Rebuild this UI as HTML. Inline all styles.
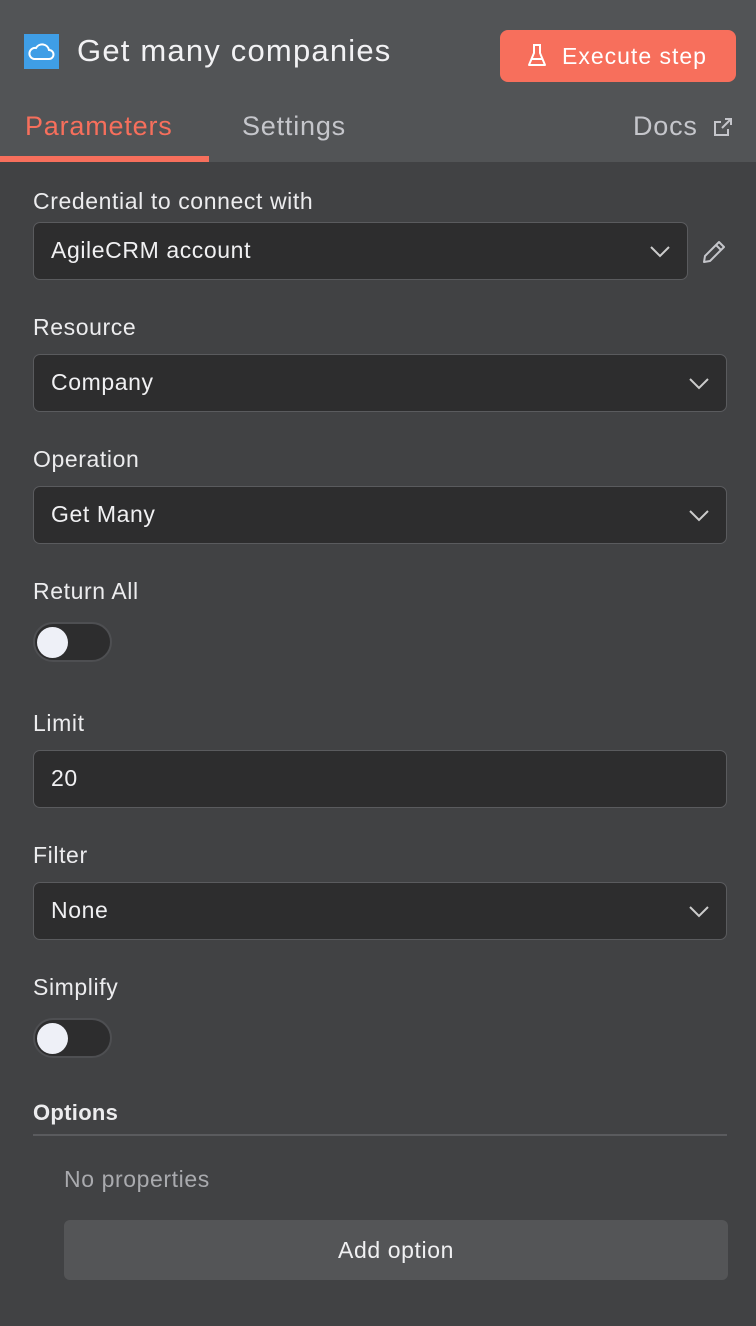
<!DOCTYPE html><html><head><style>
*{box-sizing:border-box;margin:0;padding:0}
body{width:756px;height:1326px;background:#414244;font-family:"Liberation Sans",sans-serif;color:#e8e8ea;position:relative;overflow:hidden}
.hdr{position:absolute;left:0;top:0;width:756px;height:162px;background:#525456}
.abs{position:absolute}
.lbl{position:absolute;left:33px;font-size:23px;letter-spacing:0.6px;color:#ececee}
.inp{position:absolute;left:33px;width:694px;height:58px;background:#2d2d2e;border:1.5px solid #5a5b5e;border-radius:7px;font-size:23px;letter-spacing:0.6px;padding-left:17px;line-height:55px;color:#f0f0f2}
.chev{position:absolute;right:16px;top:21px}
.tog{position:absolute;left:33px;width:79px;height:40px;border-radius:20px;background:#2d2d2e;border:2px solid #4e4f52}
.tog:after{content:"";position:absolute;left:2px;top:3px;width:31px;height:31px;border-radius:50%;background:#eef0f7}
</style></head><body>
<div class="hdr"></div>
<div class="abs" style="left:24px;top:34px;width:35px;height:35px;background:#3f9ee6"></div>
<svg class="abs" style="left:24px;top:34px" width="35" height="35" viewBox="0 0 35 35"><path d="M10 25h15a4.5 4.5 0 0 0 0-9 7 7 0 0 0-13-2 5.5 5.5 0 0 0-2 11z" fill="none" stroke="#fff" stroke-width="2"/></svg>
<div class="abs" style="left:77px;top:33px;font-size:31px;letter-spacing:1.2px;color:#f2f2f4">Get many companies</div>
<div class="abs" style="left:500px;top:30px;width:236px;height:52px;background:#f76f5c;border-radius:8px;color:#fff;font-size:23px;letter-spacing:1px;line-height:52px;padding-left:62px">Execute step</div>
<svg class="abs" style="left:526px;top:43px" width="22" height="26" viewBox="0 0 22 26"><path d="M7 2h8M8 2v8L3 22h16L14 10V2M6 16h10" fill="none" stroke="#fff" stroke-width="2" stroke-linejoin="round"/></svg>
<div class="abs" style="left:25px;top:111px;font-size:27px;letter-spacing:0.8px;color:#f76f5c">Parameters</div>
<div class="abs" style="left:0;top:156px;width:209px;height:6px;background:#f76f5c"></div>
<div class="abs" style="left:242px;top:111px;font-size:27px;letter-spacing:0.8px;color:#c5c6cb">Settings</div>
<div class="abs" style="left:633px;top:111px;font-size:27px;letter-spacing:0.8px;color:#c5c6cb">Docs</div>
<svg class="abs" style="left:712px;top:116px" width="22" height="22" viewBox="0 0 22 22"><path d="M13 3h6v6M19 3l-9 9M16 13v6H3V6h6" fill="none" stroke="#c5c6cb" stroke-width="2"/></svg>

<div class="lbl" style="top:188px">Credential to connect with</div>
<div class="inp" style="top:222px;width:655px">AgileCRM account<svg class="chev" width="22" height="14"><path d="M2 3l9 9 9-9" fill="none" stroke="#ccc" stroke-width="2"/></svg></div>
<svg class="abs" style="left:700px;top:238px" width="28" height="28" viewBox="0 0 28 28"><path d="M4 24l1-6L19 4l5 5-14 14zM16 7l5 5" fill="none" stroke="#c5c6cb" stroke-width="2" stroke-linejoin="round"/></svg>

<div class="lbl" style="top:314px">Resource</div>
<div class="inp" style="top:354px">Company<svg class="chev" width="22" height="14"><path d="M2 3l9 9 9-9" fill="none" stroke="#ccc" stroke-width="2"/></svg></div>
<div class="lbl" style="top:446px">Operation</div>
<div class="inp" style="top:486px">Get Many<svg class="chev" width="22" height="14"><path d="M2 3l9 9 9-9" fill="none" stroke="#ccc" stroke-width="2"/></svg></div>
<div class="lbl" style="top:578px">Return All</div>
<div class="tog" style="top:622px"></div>
<div class="lbl" style="top:710px">Limit</div>
<div class="inp" style="top:750px">20</div>
<div class="lbl" style="top:842px">Filter</div>
<div class="inp" style="top:882px">None<svg class="chev" width="22" height="14"><path d="M2 3l9 9 9-9" fill="none" stroke="#ccc" stroke-width="2"/></svg></div>
<div class="lbl" style="top:974px">Simplify</div>
<div class="tog" style="top:1018px"></div>
<div class="lbl" style="top:1100px;font-weight:bold;font-size:22px;letter-spacing:0.3px">Options</div>
<div class="abs" style="left:33px;top:1134px;width:694px;height:2px;background:#5a5b5e"></div>
<div class="abs" style="left:64px;top:1166px;font-size:23px;letter-spacing:0.6px;color:#a9aaae">No properties</div>
<div class="abs" style="left:64px;top:1220px;width:664px;height:60px;background:#545557;border-radius:6px;text-align:center;line-height:60px;font-size:23px;letter-spacing:0.6px;color:#f0f0f2">Add option</div>
</body></html>
